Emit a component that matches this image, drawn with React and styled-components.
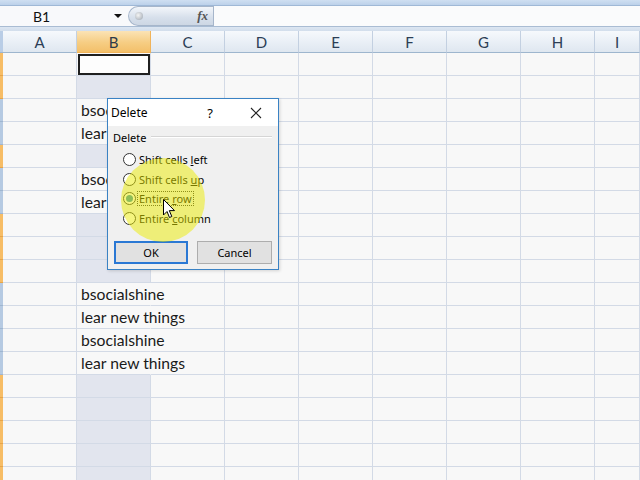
import React from "react";
import styled, { createGlobalStyle } from "styled-components";

const Global = createGlobalStyle`
  html, body { margin: 0; padding: 0; width: 640px; height: 480px; overflow: hidden; background: #f8f8f8; }
  * { box-sizing: border-box; }
`;

const Page = styled.div`
  position: relative;
  width: 640px;
  height: 480px;
  overflow: hidden;
  display: flex;
  flex-direction: column;
  font-family: Lato, "Noto Sans", sans-serif;
  & > * { flex-shrink: 0; }
`;

const TopBand = styled.div`
  height: 6px;
  background: linear-gradient(#cfdff1, #bcd1ea);
  border-bottom: 1px solid #9fb8d6;
`;

const FormulaBar = styled.div`
  height: 21px;
  display: flex;
  background: #f8f9fb;
  border-bottom: 1px solid #a9bcd3;
`;

const NameBox = styled.div`
  width: 128px;
  display: flex;
  align-items: center;
  padding-left: 33px;
  position: relative;
  font-size: 14px;
  color: #111;
`;

const DropArrow = styled.span`
  position: absolute;
  right: 6px;
  top: 8px;
  width: 0;
  height: 0;
  border-left: 4px solid transparent;
  border-right: 4px solid transparent;
  border-top: 4px solid #111;
`;

const FxPill = styled.div`
  width: 85px;
  display: flex;
  align-items: center;
  justify-content: space-between;
  padding: 0 5px 0 6px;
  border: 1px solid #a6b6cb;
  border-right: none;
  border-radius: 10px 0 0 10px;
  background: linear-gradient(#f3f6fa, #d6dfeb 60%, #cdd7e4);
`;

const PillKnob = styled.span`
  width: 8px;
  height: 8px;
  border-radius: 50%;
  background: radial-gradient(circle at 40% 40%, #f4f4f4, #9aa3ae);
`;

const FxLabel = styled.span`
  font-family: "Liberation Serif", serif;
  font-style: italic;
  font-weight: bold;
  font-size: 13px;
  color: #555;
`;

const FormulaInput = styled.div`
  flex: 1;
  background: #fafbfc;
  border-left: 1px solid #a6b6cb;
`;

const Band = styled.div`
  height: 4px;
  background: linear-gradient(#dce6f2, #d2deec);
`;

const Sheet = styled.div`
  display: grid;
  grid-template-columns: 3px repeat(8, 74px) 1fr;
  grid-auto-rows: 23px;
  grid-template-rows: 22px;
`;

const Corner = styled.div`
  background: #b9cde6;
  border-bottom: 1px solid #9eb6ce;
`;

const ColHeader = styled.div`
  display: flex;
  align-items: center;
  justify-content: center;
  font-size: 15px;
  color: ${(p) => (p.$active ? "#2d3a48" : "#2c3e55")};
  background: ${(p) =>
    p.$active
      ? "linear-gradient(#fbe3b5, #f6cd83 55%, #f3c06a)"
      : "linear-gradient(#f6f9fc, #e9eff6 55%, #dfe7f0)"};
  border-right: 1px solid ${(p) => (p.$active ? "#f0b35a" : "#c3d0e1")};
  border-bottom: 1px solid ${(p) => (p.$active ? "#f0b35a" : "#9eb6ce")};
`;

const RowStrip = styled.div`
  background: ${(p) => (p.$sel ? "#f7bd66" : "#b6cae2")};
  border-bottom: 1px solid ${(p) => (p.$sel ? "#e8a548" : "#9fb6d0")};
`;

const Cell = styled.div`
  position: relative;
  background: ${(p) => (p.$shaded ? "#e2e5ee" : "#f8f8f8")};
  border-right: 1px solid ${(p) => (p.$noRight ? "transparent" : "#d3dae6")};
  border-bottom: 1px solid #d3dae6;
  ${(p) => p.$text && "z-index: 1;"}
`;

const ActiveBox = styled.div`
  position: absolute;
  left: 1px;
  top: 1px;
  right: 0;
  bottom: 0;
  border: 2px solid #1f1f1f;
  background: #fdfdfd;
`;

const CellText = styled.span`
  position: absolute;
  left: 4px;
  bottom: 2px;
  white-space: nowrap;
  font-size: 15.7px;
  color: #1a1a1a;
`;

const Dialog = styled.div`
  position: absolute;
  left: 107px;
  top: 98px;
  width: 172px;
  height: 172px;
  border: 1px solid #3a82c4;
  background: #f0f0f0;
  display: flex;
  flex-direction: column;
  font-family: "Noto Sans", "Open Sans", sans-serif;
  font-size: 11px;
  color: #000;
  z-index: 5;
  box-shadow: 1px 1px 3px rgba(0, 0, 0, 0.15);
`;

const TitleBar = styled.div`
  height: 27px;
  background: #ffffff;
  display: flex;
  align-items: center;
  padding-left: 3px;
`;

const Title = styled.span`
  flex: 1;
  font-size: 12px;
`;

const HelpBtn = styled.span`
  width: 20px;
  text-align: center;
  font-size: 13px;
  margin-right: 30px;
`;

const CloseBtn = styled.svg`
  width: 12px;
  height: 12px;
  margin-right: 16px;
`;

const Body = styled.div`
  flex: 1;
  display: flex;
  flex-direction: column;
  padding: 3px 6px 0 5px;
`;

const Legend = styled.div`
  display: flex;
  align-items: center;
  gap: 5px;
  height: 16px;
  font-size: 11px;
`;

const LegendLine = styled.span`
  flex: 1;
  height: 2px;
  border-top: 1px solid #d5d5d5;
  border-bottom: 1px solid #ffffff;
`;

const RadioList = styled.div`
  display: flex;
  flex-direction: column;
  gap: 4px;
  padding: 7px 0 0 10px;
`;

const RadioRow = styled.div`
  display: flex;
  align-items: center;
  gap: 1px;
  height: 15.5px;
`;

const RadioCircle = styled.span`
  width: 13px;
  height: 13px;
  border-radius: 50%;
  border: 1px solid #333;
  background: #fff;
  display: flex;
  align-items: center;
  justify-content: center;
  &::after {
    content: "";
    width: 7px;
    height: 7px;
    border-radius: 50%;
    background: ${(p) => (p.$checked ? "#2f8fb0" : "transparent")};
  }
`;

const RadioLabel = styled.span`
  padding: 0 1px;
  line-height: 13px;
  border: 1px dotted ${(p) => (p.$focus ? "#333" : "transparent")};
  & u { text-decoration: underline; }
`;

const ButtonRow = styled.div`
  display: flex;
  justify-content: space-between;
  margin-top: 15px;
  padding-left: 1px;
`;

const DialogButton = styled.div`
  width: ${(p) => (p.$default ? "74px" : "75px")};
  height: 23px;
  display: flex;
  align-items: center;
  justify-content: center;
  font-size: 11px;
  background: #e1e1e1;
  border: ${(p) => (p.$default ? "2px solid #2a78d4" : "1px solid #adadad")};
`;

const Highlight = styled.div`
  position: absolute;
  left: 121px;
  top: 158px;
  width: 84px;
  height: 84px;
  border-radius: 50%;
  background: rgba(236, 236, 0, 0.5);
  pointer-events: none;
  z-index: 6;
`;

const Cursor = styled.svg`
  position: absolute;
  left: 163px;
  top: 199px;
  width: 13px;
  height: 20px;
  z-index: 7;
`;

const cols = ["A", "B", "C", "D", "E", "F", "G", "H", "I"];

const texts = {
  3: "bsocialshine",
  4: "lear new things",
  6: "bsocialshine",
  7: "lear new things",
  11: "bsocialshine",
  12: "lear new things",
  13: "bsocialshine",
  14: "lear new things",
};

const rows = Array.from({ length: 19 }, (_, i) => {
  const n = i + 1;
  const text = texts[n];
  return { n, text, sel: !text };
});

const options = [
  { pre: "Shift cells ", key: "l", post: "eft" },
  { pre: "Shift cells ", key: "u", post: "p" },
  { pre: "Entire ", key: "r", post: "ow", checked: true },
  { pre: "Entire ", key: "c", post: "olumn" },
];

export default function App() {
  return (
    <Page>
      <Global />
      <TopBand />
      <FormulaBar>
        <NameBox>
          B1
          <DropArrow />
        </NameBox>
        <FxPill>
          <PillKnob />
          <FxLabel>fx</FxLabel>
        </FxPill>
        <FormulaInput />
      </FormulaBar>
      <Band />
      <Sheet>
        <Corner />
        {cols.map((c) => (
          <ColHeader key={c} $active={c === "B"}>
            {c}
          </ColHeader>
        ))}
        {rows.map((r) => (
          <React.Fragment key={r.n}>
            <RowStrip $sel={r.sel} />
            {cols.map((c) => {
              const isB = c === "B";
              return (
                <Cell
                  key={c}
                  $shaded={isB && r.sel && r.n !== 1}
                  $noRight={isB && !!r.text}
                  $text={isB && !!r.text}
                >
                  {isB && r.n === 1 && <ActiveBox />}
                  {isB && r.text && <CellText>{r.text}</CellText>}
                </Cell>
              );
            })}
          </React.Fragment>
        ))}
      </Sheet>

      <Dialog>
        <TitleBar>
          <Title>Delete</Title>
          <HelpBtn>?</HelpBtn>
          <CloseBtn viewBox="0 0 12 12">
            <path d="M1 1 L11 11 M11 1 L1 11" stroke="#222" strokeWidth="1.1" fill="none" />
          </CloseBtn>
        </TitleBar>
        <Body>
          <Legend>
            Delete
            <LegendLine />
          </Legend>
          <RadioList>
            {options.map((o, i) => (
              <RadioRow key={i}>
                <RadioCircle $checked={o.checked} />
                <RadioLabel $focus={o.checked}>
                  {o.pre}
                  <u>{o.key}</u>
                  {o.post}
                </RadioLabel>
              </RadioRow>
            ))}
          </RadioList>
          <ButtonRow>
            <DialogButton $default>OK</DialogButton>
            <DialogButton>Cancel</DialogButton>
          </ButtonRow>
        </Body>
      </Dialog>
      <Highlight />
      <Cursor viewBox="0 0 13 20">
        <path
          d="M0.5 0.5 L0.5 16 L4 12.5 L6.5 18.5 L8.8 17.5 L6.3 11.6 L11.5 11.6 Z"
          fill="#fff"
          stroke="#000"
          strokeWidth="1"
          strokeLinejoin="round"
        />
      </Cursor>
    </Page>
  );
}
